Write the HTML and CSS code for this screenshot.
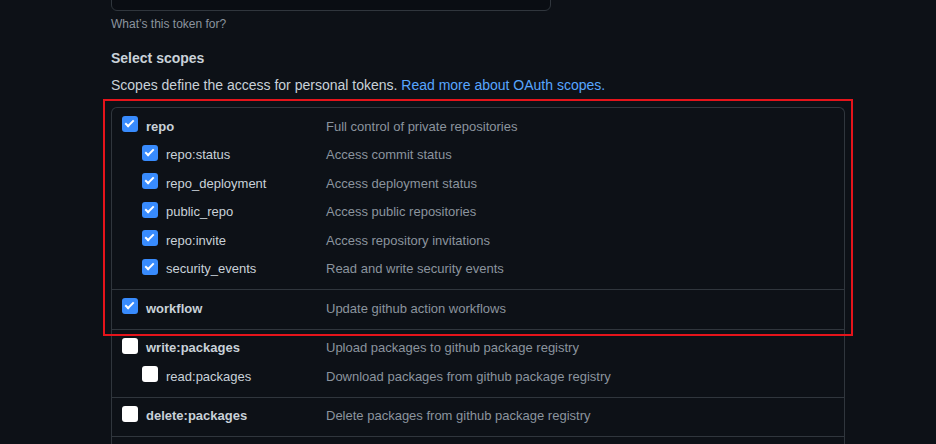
FILE: index.html
```html
<!DOCTYPE html>
<html lang="en">
<head>
	<meta charset="UTF-8" />
	<meta name="viewport" content="width=device-width, initial-scale=1.0" />
	<title>New personal access token</title>
	<link rel="stylesheet" href="styles.css">
</head>
<body>
	<main class="page">
		<div class="note-field"></div>
		<p class="note-hint">What’s this token for?</p>

		<h3 class="scopes-title">Select scopes</h3>
		<p class="scopes-lead">
			Scopes define the access for personal tokens.
			<a href="#">Read more about OAuth scopes.</a>
		</p>

		<div class="scopes">
			<div class="highlight">
				<div class="scope-group">
					<div class="scope">
						<label class="scope-name top"><span class="check on"></span>repo</label>
						<span class="scope-desc">Full control of private repositories</span>
					</div>
					<div class="scope sub">
						<label class="scope-name"><span class="check on"></span>repo:status</label>
						<span class="scope-desc">Access commit status</span>
					</div>
					<div class="scope sub">
						<label class="scope-name"><span class="check on"></span>repo_deployment</label>
						<span class="scope-desc">Access deployment status</span>
					</div>
					<div class="scope sub">
						<label class="scope-name"><span class="check on"></span>public_repo</label>
						<span class="scope-desc">Access public repositories</span>
					</div>
					<div class="scope sub">
						<label class="scope-name"><span class="check on"></span>repo:invite</label>
						<span class="scope-desc">Access repository invitations</span>
					</div>
					<div class="scope sub">
						<label class="scope-name"><span class="check on"></span>security_events</label>
						<span class="scope-desc">Read and write security events</span>
					</div>
				</div>
				<div class="scope-group">
					<div class="scope">
						<label class="scope-name top"><span class="check on"></span>workflow</label>
						<span class="scope-desc">Update github action workflows</span>
					</div>
				</div>
			</div>
			<div class="scope-group">
				<div class="scope">
					<label class="scope-name top"><span class="check"></span>write:packages</label>
					<span class="scope-desc">Upload packages to github package registry</span>
				</div>
				<div class="scope sub">
					<label class="scope-name"><span class="check"></span>read:packages</label>
					<span class="scope-desc">Download packages from github package registry</span>
				</div>
			</div>
			<div class="scope-group">
				<div class="scope">
					<label class="scope-name top"><span class="check"></span>delete:packages</label>
					<span class="scope-desc">Delete packages from github package registry</span>
				</div>
			</div>
		</div>
	</main>
</body>
</html>
```

FILE: styles.css
```css
:root {
	--bg: #0d1117;
	--field-bg: #0a0d13;
	--border: #30363d;
	--text-1: #c9d1d9;
	--text-2: #8b949e;
	--link: #58a6ff;
	--check: #388bfd;
	--mark: #e5141b;
}

*,
*:after,
*:before {
	box-sizing: border-box;
}

html,
body {
	height: 100%;
	overflow: hidden;
}

body {
	margin: 0;
	background: var(--bg);
	color: var(--text-1);
	font-family: 'Liberation Sans', Arial, sans-serif;
	font-size: 14px;
}

.page {
	width: 734px;
	margin: -21px 0 0 111px;
}

.note-field {
	width: 440px;
	height: 32px;
	background: var(--field-bg);
	border: 1px solid var(--border);
	border-radius: 6px;
}

.note-hint {
	margin: 6px 0 0;
	font-size: 12px;
	color: var(--text-2);
}

.scopes-title {
	margin: 19px 0 0;
	font-size: 14px;
	font-weight: bold;
}

.scopes-lead {
	margin: 11px 0 0;
}

.scopes-lead a {
	color: var(--link);
	text-decoration: none;
}

.scopes {
	margin-top: 14px;
	padding-bottom: 12px;
	border: 1px solid var(--border);
	border-bottom: 0;
	border-radius: 6px 6px 0 0;
}

/* the red box drawn round repo + workflow */
.highlight {
	position: relative;
}

.highlight:after {
	content: '';
	position: absolute;
	inset: -9px -9px -6px -9px;
	border: 2px solid var(--mark);
	pointer-events: none;
}

.scope-group {
	padding: 4px 0 6px;
	border-bottom: 1px solid var(--border);
}

.scope {
	display: grid;
	grid-template-columns: 204px 1fr;
	align-items: center;
	height: 28.5px;
	padding-left: 10px;
}

.scope-name {
	display: flex;
	align-items: center;
	gap: 8px;
	font-size: 13px;
	color: var(--text-1);
}

.scope-name.top {
	font-weight: bold;
}

.scope.sub .scope-name {
	padding-left: 20px;
}

.scope-desc {
	font-size: 13px;
	color: var(--text-2);
}

.check {
	width: 16px;
	height: 16px;
	flex: none;
	border-radius: 3px;
	background: #fff;
	position: relative;
	top: -2px;
}

.check.on {
	background: var(--check);
}

.check.on:after {
	content: '';
	position: absolute;
	left: 5px;
	top: 2px;
	width: 5px;
	height: 9px;
	border: solid #fff;
	border-width: 0 2px 2px 0;
	transform: rotate(45deg);
}
```
